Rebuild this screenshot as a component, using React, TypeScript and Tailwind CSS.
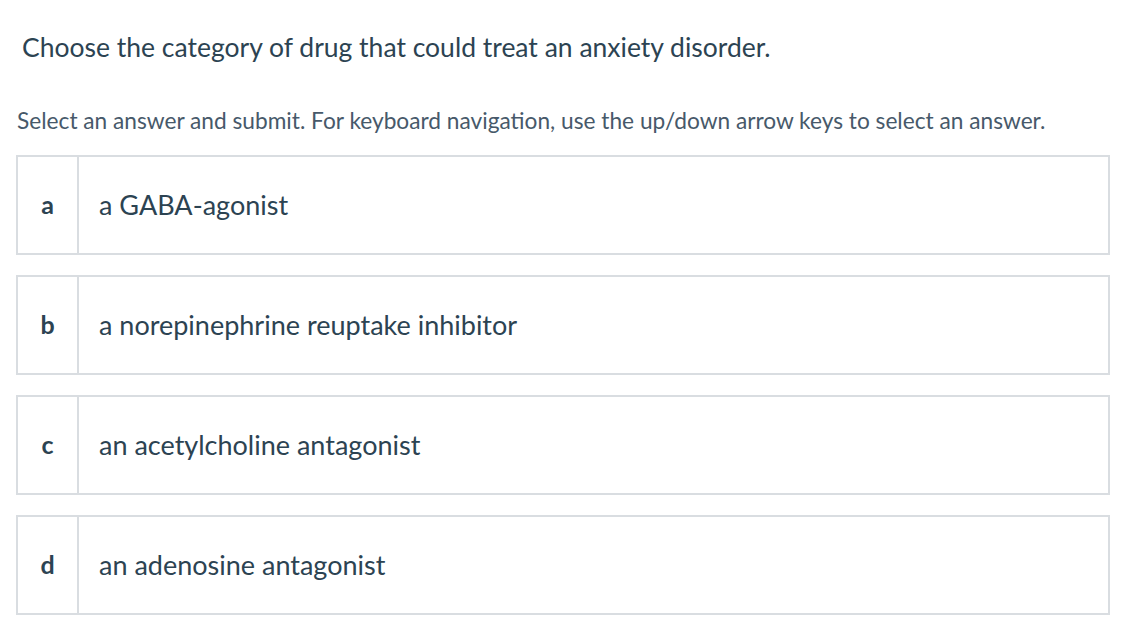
import React from "react";

interface Choice {
  key: string;
  text: string;
}

const CHOICES: Choice[] = [
  { key: "a", text: "a GABA-agonist" },
  { key: "b", text: "a norepinephrine reuptake inhibitor" },
  { key: "c", text: "an acetylcholine antagonist" },
  { key: "d", text: "an adenosine antagonist" },
];

const FONT = "font-['Lato','Open_Sans',sans-serif]";

const App: React.FC = () => {
  return (
    <div className={`min-h-[618px] w-[1124px] bg-white pl-4 pr-[14px] pt-[31px] ${FONT}`}>
      <h1 className="pl-[6px] text-[26.5px] leading-[32px] text-[#2c4352]">
        Choose the category of drug that could treat an anxiety disorder.
      </h1>
      <p className="mt-[44px] pl-[1px] text-[22.7px] leading-[28px] text-[#47596a]">
        Select an answer and submit. For keyboard navigation, use the up/down arrow keys to select an answer.
      </p>
      <div className="mt-[20px] flex flex-col gap-5">
        {CHOICES.map((c) => (
          <div
            key={c.key}
            className="flex h-[100px] border-2 border-[#d9dde1] bg-white"
          >
            <div className="flex w-[61px] shrink-0 items-center justify-center border-r-2 border-[#d9dde1] text-[25px] font-bold text-[#2c4352]">
              {c.key}
            </div>
            <div className="flex items-center pl-[20px] text-[27px] text-[#2c4352]">
              {c.text}
            </div>
          </div>
        ))}
      </div>
    </div>
  );
};

export default App;
